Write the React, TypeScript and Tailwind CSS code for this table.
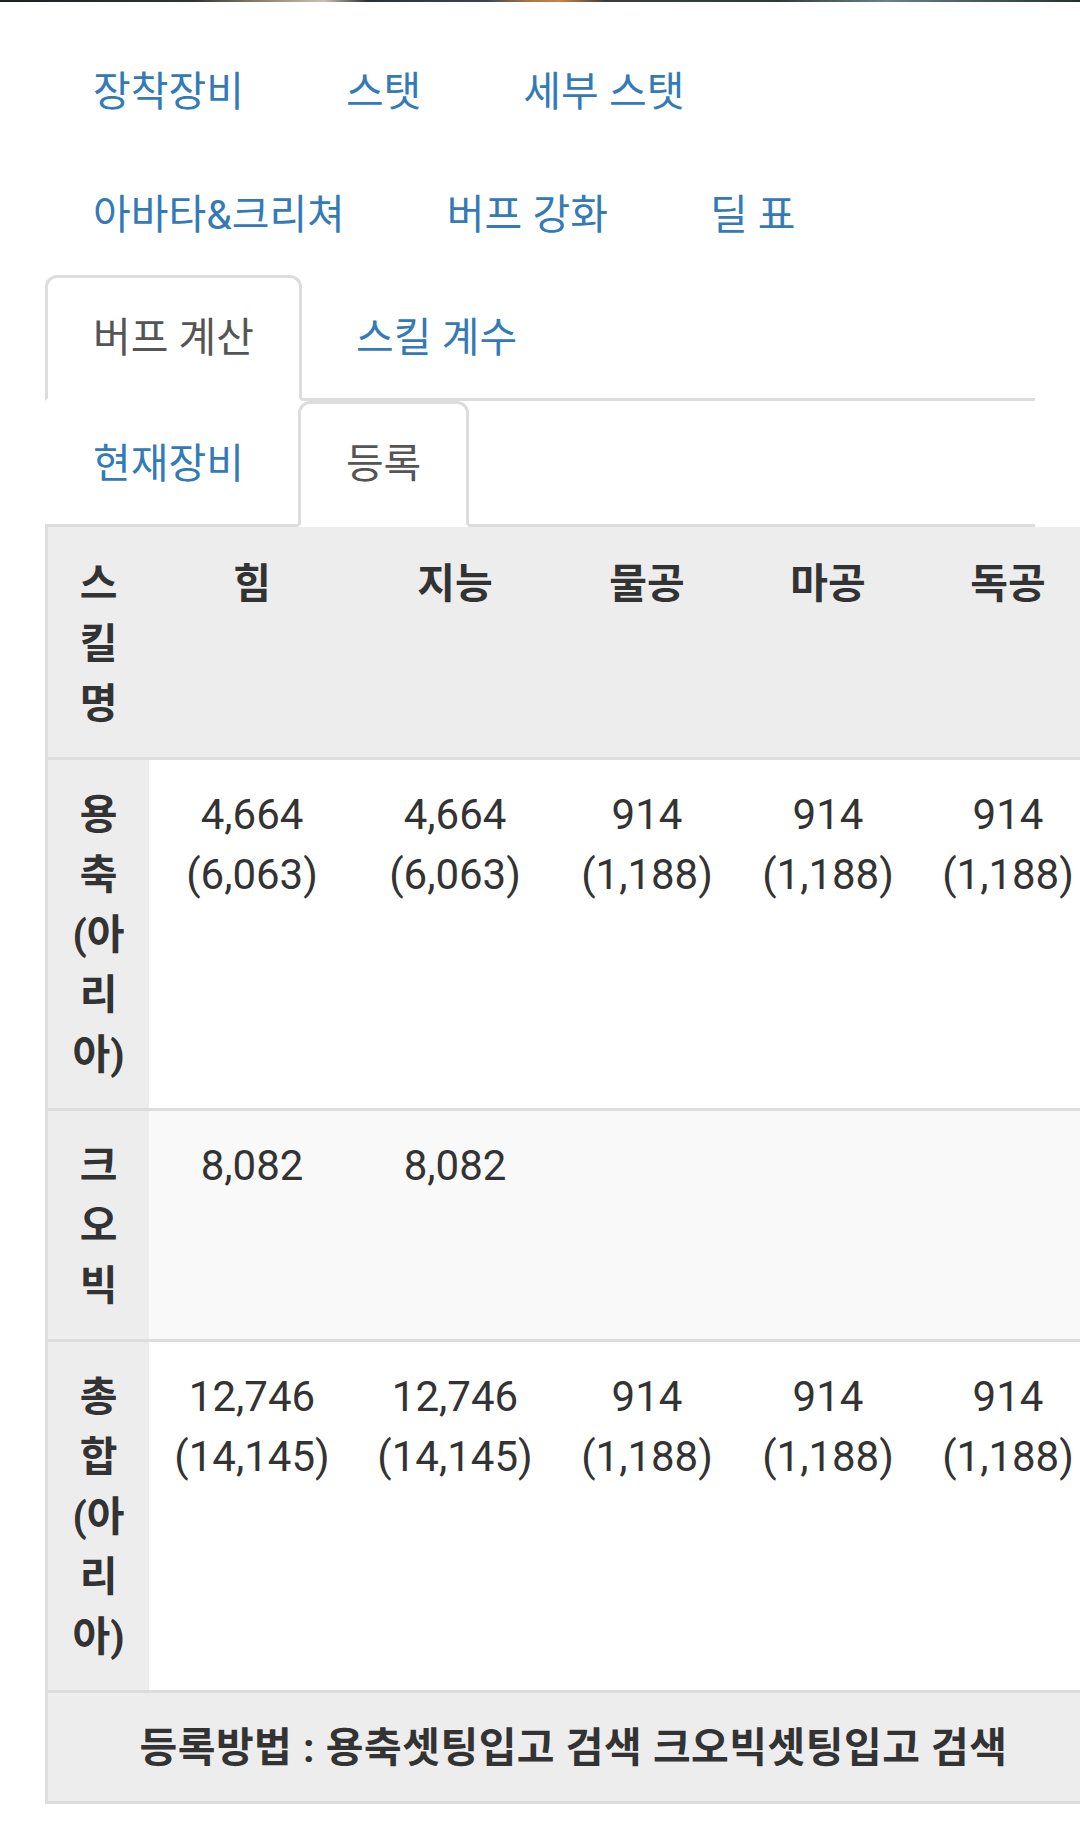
import React from "react";

const topTabs = ["장착장비", "스탯", "세부 스탯", "아바타&크리쳐", "버프 강화", "딜 표"];

interface Row {
  label: string[];
  values: [string, string?][];
  striped?: boolean;
}

const rows: Row[] = [
  {
    label: ["용", "축", "(아", "리", "아)"],
    values: [
      ["4,664", "(6,063)"],
      ["4,664", "(6,063)"],
      ["914", "(1,188)"],
      ["914", "(1,188)"],
      ["914", "(1,188)"],
    ],
  },
  {
    label: ["크", "오", "빅"],
    values: [["8,082"], ["8,082"], [""], [""], [""]],
    striped: true,
  },
  {
    label: ["총", "합", "(아", "리", "아)"],
    values: [
      ["12,746", "(14,145)"],
      ["12,746", "(14,145)"],
      ["914", "(1,188)"],
      ["914", "(1,188)"],
      ["914", "(1,188)"],
    ],
  },
];

const headers = ["힘", "지능", "물공", "마공", "독공"];

const hangul = "text-[41px]";
const cols = "grid grid-cols-[101px_206px_200px_184px_178px_182px]";

function Tab({ label, active }: { label: string; active?: boolean }) {
  return (
    <li className="mb-[-3px] mr-[6px]">
      <span
        className={
          "block px-[45px] py-[30px] leading-[60px] border-[3px] rounded-t-[12px] " +
          hangul +
          (active
            ? " border-[#ddd] border-b-transparent bg-white text-[#555]"
            : " border-transparent text-[#337ab7]")
        }
      >
        {label}
      </span>
    </li>
  );
}

export default function App() {
  return (
    <div className="w-[1080px] min-h-[1845px] overflow-hidden bg-white text-[#333] font-[Roboto,'Noto_Sans_CJK_KR',sans-serif]">
      {/* bottom edge of the banner image */}
      <div className="h-[2px] bg-[linear-gradient(90deg,#1b2024_0%,#2f3436_18%,#8a7f6a_24%,#c9c2b4_30%,#2a3036_34%,#3c4450_45%,#a8774a_49%,#c9804a_52%,#3a3e3a_56%,#2e3a3a_72%,#6d8082_82%,#233030_100%)]" />

      <div className="px-[45px] pt-[27px]">
        {/* main menu */}
        <ul className="flex flex-wrap">
          {topTabs.map(t => (
            <Tab key={t} label={t} />
          ))}
        </ul>

        {/* sub tabs */}
        <ul className="flex border-b-[3px] border-[#ddd]">
          <Tab label="버프 계산" active />
          <Tab label="스킬 계수" />
        </ul>
        <ul className="flex border-b-[3px] border-[#ddd]">
          <Tab label="현재장비" />
          <Tab label="등록" active />
        </ul>

        {/* buff table */}
        <div className="w-[1054px] border-l-[3px] border-b-[3px] border-[#ddd] leading-[60px]">
          <div className={cols + " bg-[#ededed] font-bold border-b-[3px] border-[#ddd]"}>
            <div className={"pt-[27px] pb-[23px] text-center " + hangul}>
              <div>스</div>
              <div>킬</div>
              <div>명</div>
            </div>
            {headers.map(h => (
              <div key={h} className={"pt-[27px] pb-[23px] text-center " + hangul}>
                {h}
              </div>
            ))}
          </div>

          {rows.map((row, i) => (
            <div
              key={i}
              className={cols + " border-b-[3px] border-[#ddd] " + (row.striped ? "bg-[#f9f9f9]" : "bg-white")}
            >
              <div className={"pt-[25px] pb-[23px] text-center font-bold bg-[#ededed] " + hangul}>
                {row.label.map((l, j) => (
                  <div key={j}>{l}</div>
                ))}
              </div>
              {row.values.map((v, j) => (
                <div key={j} className="pt-[25px] pb-[23px] text-center text-[42px]">
                  <div>{v[0]}</div>
                  {v[1] && <div>{v[1]}</div>}
                </div>
              ))}
            </div>
          ))}

          <div className={"pt-[25px] pb-[23px] text-center font-bold tracking-[0.5px] bg-[#ededed] " + hangul}>
            등록방법 : 용축셋팅입고 검색 크오빅셋팅입고 검색
          </div>
        </div>
      </div>
    </div>
  );
}
